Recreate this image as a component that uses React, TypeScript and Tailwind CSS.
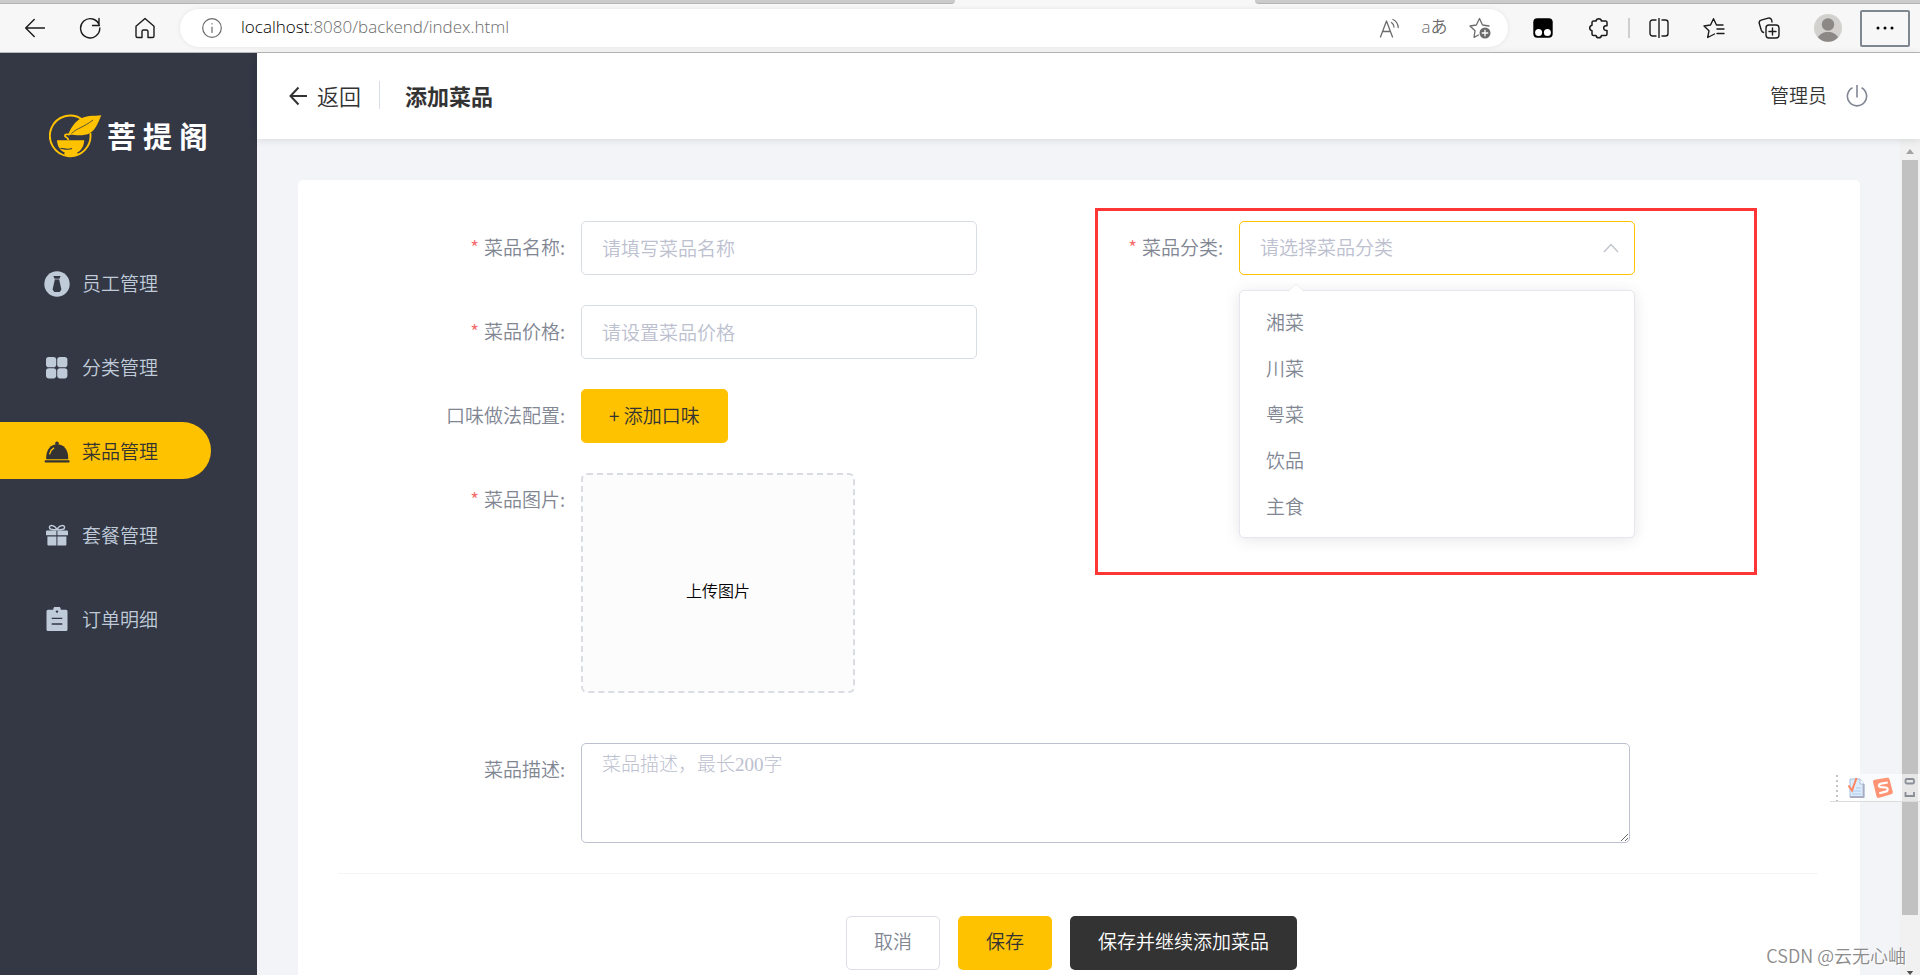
import { useState } from 'react'
import type { ReactNode } from 'react'
import clsx from 'clsx'

const menu = [
  { id: 'member', name: '员工管理', icon: <TieIcon /> },
  { id: 'category', name: '分类管理', icon: <GridIcon /> },
  { id: 'food', name: '菜品管理', icon: <DishIcon /> },
  { id: 'combo', name: '套餐管理', icon: <GiftIcon /> },
  { id: 'order', name: '订单明细', icon: <OrderIcon /> },
]

const categories = ['湘菜', '川菜', '粤菜', '饮品', '主食']

function TieIcon() {
  return (
    <svg viewBox="0 0 26 26" className="w-[26px] h-[26px]">
      <circle cx="13" cy="13" r="12.7" fill="currentColor" />
      <path d="M9.3 5h7.4l-1.6 3.2 2.3 10.2-1.7 2.6h-5.4l-1.7-2.6 2.3-10.2z" fill="#343744" />
      <path d="M10.6 8.1h4.8" stroke="currentColor" strokeWidth=".7" />
    </svg>
  )
}

function GridIcon() {
  return (
    <svg viewBox="0 0 26 26" className="w-[26px] h-[26px]" fill="currentColor">
      <rect x="2" y="2" width="10.200" height="10.200" rx="2.8" />
      <rect x="13.200" y="2" width="10.200" height="10.200" rx="2.8" />
      <rect x="2" y="13.200" width="10.200" height="10.200" rx="2.8" />
      <rect x="13.200" y="13.200" width="10.200" height="10.200" rx="2.8" />
    </svg>
  )
}

function DishIcon() {
  return (
    <svg viewBox="0 0 26 26" className="w-[26px] h-[26px]" fill="currentColor">
      <circle cx="13" cy="4.2" r="1.8" />
      <path d="M2.2 20.2v-1.6C2.2 10.500 6.800 5.200 13.200 5.200s11 5.300 11 13.400v1.600z" />
      <path d="M5.700 14.800c.6-2.600 1.900-4.500 4-5.700" stroke="#ffc200" strokeWidth="1.300" fill="none" strokeLinecap="round" />
      <rect x=".6" y="21.200" width="25" height="2.200" rx="1" />
    </svg>
  )
}

function GiftIcon() {
  return (
    <svg viewBox="0 0 26 26" className="w-[26px] h-[26px]" fill="currentColor">
      <path d="M13 6.600C11 2 5.200 1.200 5.400 4.600c.1 2.200 4 2.200 7.600 2zM13 6.600c2-4.600 7.800-5.400 7.600-2-.1 2.200-4 2.200-7.600 2z" fill="none" stroke="currentColor" strokeWidth="1.400" />
      <path d="M3 7.400h9.400v4.800H2V8.400a1 1 0 0 1 1-1zM13.400 7.400H23a1 1 0 0 1 1 1v3.800H13.400z" />
      <path d="M3.400 13.400h9v9.200h-8a1 1 0 0 1-1-1zM13.400 13.400h9v8.200a1 1 0 0 1-1 1h-8z" />
    </svg>
  )
}

function OrderIcon() {
  return (
    <svg viewBox="0 0 26 26" className="w-[26px] h-[26px]">
      <path d="M4 2.800h5.200a3.600 3.600 0 0 1 7.600 0H22a1.500 1.500 0 0 1 1.500 1.500v18.200A1.500 1.500 0 0 1 22 24H4a1.500 1.500 0 0 1-1.500-1.500V4.300A1.500 1.500 0 0 1 4 2.800z" fill="currentColor" />
      <circle cx="13" cy="4.600" r="1.200" fill="#343744" />
      <path d="M7.700 11.300h10.600M7.700 17h10.600" stroke="#343744" strokeWidth="1.300" />
    </svg>
  )
}

function Logo() {
  return (
    <div className="flex items-center text-white">
      <svg viewBox="0 0 53 44" className="w-[53px] h-[44px]">
        <path d="M33.500 5.700A20.300 20.300 0 1 0 41.300 19" fill="none" stroke="#ffc200" strokeWidth="1.900" />
        <path d="M19 21.500C21 15 25 9 30 5.500 36 1.500 45 2 52.300 1.300 49.500 8 47 15.500 41 19c-6 3.500-14 2-19.500 1.800z" fill="#ffc200" />
        <path d="M22.500 19.500c5.500-5.500 12-6 21.500-13.500" fill="none" stroke="#343744" strokeWidth=".8" />
        <path d="M20.500 20.600c-2.500-.8-5-.2-4.600 1.400.4 1.500 3.600 1 3.400 4.200" fill="none" stroke="#ffc200" strokeWidth="1.700" />
        <path d="M8 26.200h27.200c-.2 5.800-2.800 10.200-7.200 12.600v1.600H16v-1.600C11 36.400 8.200 32 8 26.200z" fill="#ffc200" />
        <path d="M11.500 34.300c4 .2 6 2.200 11.500.2" fill="none" stroke="#343744" strokeWidth="1.100" />
        <path d="M15 39h14l-1.500 2.800h-11z" fill="#ffc200" />
      </svg>
      <div className="ml-[5px] flex gap-[7px] pb-[3px] text-[29px] leading-[40px] font-bold">
        <span>菩</span>
        <span>提</span>
        <span>阁</span>
      </div>
    </div>
  )
}

function BarButton({ label, className, children }: { label: string; className: string; children: ReactNode }) {
  return (
    <button type="button" aria-label={label} className={clsx('flex h-[37px] shrink-0 items-center justify-center', className)}>
      {children}
    </button>
  )
}

const line = { fill: 'none', stroke: 'currentColor', strokeWidth: 1.4, strokeLinecap: 'round', strokeLinejoin: 'round' } as const

function BrowserBar() {
  return (
    <div className="shrink-0 border-b border-[#b9b9b9] bg-[#f7f7f7]">
      <div className="flex h-1 justify-between">
        <div className="w-[955px] rounded-br-lg border-b border-[#b4b4b4] bg-[#cbcbcb]" />
        <div className="w-[665px] rounded-bl-lg border-b border-[#b4b4b4] bg-[#cbcbcb]" />
      </div>
      <div className="flex h-12 items-center text-[#1b1b1b]">
        <div className="flex pl-[7px]">
          <BarButton label="后退" className="w-[55px]">
            <svg viewBox="0 0 20 20" className="size-5" {...line}><path d="M19.500 10H.7M9.200 1.500.7 10l8.500 8.500" /></svg>
          </BarButton>
          <BarButton label="刷新" className="w-[55px]">
            <svg viewBox="0 0 22 22" className="size-[22px]" {...line}><path d="M20.400 8.500A9.600 9.600 0 1 0 20.800 11M20 1.500v7h-6.500" /></svg>
          </BarButton>
          <BarButton label="主页" className="w-[55px]">
            <svg viewBox="0 0 22 22" className="size-[22px]" {...line}><path d="M2 9.200 11 1.500l9 7.700v9.800a1.500 1.500 0 0 1-1.500 1.500H14v-6a1.500 1.500 0 0 0-1.500-1.500h-3A1.500 1.500 0 0 0 8 14.500v6H3.500A1.500 1.500 0 0 1 2 19z" /></svg>
          </BarButton>
        </div>
        <div className="ml-2 flex h-[38px] flex-1 items-center rounded-full bg-white pr-[6px] pl-[22px] text-[#6b6b6b] shadow-[0_0_5px_rgba(0,0,0,0.08)]">
          <svg viewBox="0 0 20 20" className="size-5" {...line} strokeWidth={1.200}>
            <circle cx="10" cy="10" r="9.300" />
            <path d="M10 9v5.500M10 5.600v.3" />
          </svg>
          <div className="ml-[19px] flex-1 pb-0.5 font-['Open_Sans','Noto_Sans',sans-serif] text-[17px] leading-6">
            <span className="text-black">localhost</span>:8080/backend/index.html
          </div>
          <BarButton label="大声朗读" className="w-[45px]">
            <svg viewBox="0 0 22 20" className="h-5 w-[22px]" {...line} strokeWidth={1.300}>
              <path d="M1.500 19 7.500 3l6 16M3.500 13.500h8M12.500 4.500c1.500 1 2.300 2.500 2.500 4.500M14 1.500c3 1.500 5 4.500 5.200 8" />
            </svg>
          </BarButton>
          <BarButton label="翻译" className="w-[45px]">
            <span className="pb-0.5 font-['Open_Sans','Noto_Sans_CJK_JP',sans-serif] text-[17px] leading-5">aあ</span>
          </BarButton>
          <BarButton label="收藏此页" className="w-[45px]">
            <svg viewBox="0 0 22 22" className="size-[22px]" {...line} strokeWidth={1.300}>
              <path d="M9.500 18 5 20.300l1-6.500L1 9l6.300-1L10.500 1.500 13.500 8l6.500 1" />
              <circle cx="16" cy="16" r="5.500" fill="#6b6b6b" stroke="none" />
              <path d="M16 13.200v5.600M13.200 16h5.600" stroke="#fff" />
            </svg>
          </BarButton>
        </div>
        <div className="ml-[7px] mr-[10px] flex items-center">
          <BarButton label="篡改猴" className="w-14">
            <svg viewBox="0 0 20 20" className="size-5">
              <rect x=".3" y=".3" width="19.400" height="19.400" rx="4" fill="#000" />
              <circle cx="5.600" cy="14.500" r="3.500" fill="#fff" />
              <circle cx="14.400" cy="14.500" r="3.500" fill="#fff" />
            </svg>
          </BarButton>
          <BarButton label="扩展" className="w-14">
            <svg viewBox="0 0 22 22" className="size-[22px]" {...line} strokeWidth={1.500}>
              <path d="M8 4a2.800 2.800 0 0 1 5.500 0h4A1.500 1.500 0 0 1 19 5.500v3.300h-1a2.300 2.300 0 0 0 0 4.600h1v3.600a1.500 1.500 0 0 1-1.500 1.500h-4a2.800 2.800 0 0 1-5.500 0H5.500A1.500 1.500 0 0 1 4 17v-3.200a2.800 2.800 0 0 1 0-5.500V5.500A1.500 1.500 0 0 1 5.500 4z" />
            </svg>
          </BarButton>
          <div className="mx-px h-5 w-0.5 bg-[#cfcfcf]" />
          <BarButton label="分屏" className="w-[55px]">
            <svg viewBox="0 0 20 20" className="size-5" {...line}><path d="M7 2H3.500A2.500 2.500 0 0 0 1 4.500v11A2.500 2.500 0 0 0 3.500 18H7M13 2h3.500A2.500 2.500 0 0 1 19 4.500v11a2.500 2.500 0 0 1-2.500 2.500H13M10 .5v19" /></svg>
          </BarButton>
          <BarButton label="收藏夹" className="w-[55px]">
            <svg viewBox="0 0 22 22" className="size-[22px]" {...line}>
              <path d="m11.500 17-6.800 3.500 1.300-6.800L1 9l6.500-1 3-6.300L13.500 8H20M14 12h7M14 16.500h7" />
            </svg>
          </BarButton>
          <BarButton label="集锦" className="w-[55px]">
            <svg viewBox="0 0 22 22" className="size-[22px]" {...line}>
              <rect x="8" y="8" width="13" height="13" rx="3" />
              <path d="M14.500 11v7M11 14.500h7M5.500 15.500c-1.200-.4-1.800-1-2.200-2.200L1.300 6.500C.8 4.800 1.500 3.700 3.200 3.200l7-2c1.800-.5 3 .3 3.500 2L14 5" />
            </svg>
          </BarButton>
          <BarButton label="个人资料" className="ml-1 w-14">
            <svg viewBox="0 0 28 28" className="size-7">
              <circle cx="14" cy="14" r="14" fill="#d3d1ce" />
              <circle cx="14" cy="10.500" r="6.200" fill="#8b8885" />
              <path d="M4 23.500c1.500-3.500 5.500-5.500 10-5.500s8.500 2 10 5.500a14 14 0 0 1-20 0z" fill="#8b8885" />
            </svg>
          </BarButton>
          <BarButton label="设置及其他" className="ml-1 w-[50px] rounded-xs border-2 border-[#7f8791]">
            <svg viewBox="0 0 18 4" className="h-1 w-[18px]"><circle cx="2" cy="2" r="1.500" /><circle cx="9" cy="2" r="1.500" /><circle cx="16" cy="2" r="1.500" /></svg>
          </BarButton>
        </div>
      </div>
    </div>
  )
}

function Sidebar() {
  const [active, setActive] = useState('food')

  return (
    <aside className="w-[257px] shrink-0 bg-[#343744]">
      <div className="pt-[61px] pl-[49px]">
        <Logo />
      </div>
      <nav className="mt-[96px] flex flex-col gap-[27px]">
        {menu.map((item) => (
          <a
            key={item.id}
            href={`#${item.id}`}
            onClick={() => setActive(item.id)}
            className={clsx(
              'mr-[46px] flex h-[57px] items-center rounded-r-full pt-0.5 pl-11 text-[19px]',
              active === item.id ? 'bg-[#ffc200] text-[#333333]' : 'text-[#bfcbd9]',
            )}
          >
            {item.icon}
            <span className="ml-3">{item.name}</span>
          </a>
        ))}
      </nav>
    </aside>
  )
}

function Label({ htmlFor, required, children }: { htmlFor: string; required?: boolean; children: ReactNode }) {
  return (
    <label htmlFor={htmlFor} className="w-[243px] shrink-0 pr-4 text-right leading-[52px] text-[#818693]">
      {required && <span className="mr-[5px] text-[#f56c6c]">*</span>}
      {children}
    </label>
  )
}

function CategorySelect() {
  const [value, setValue] = useState('')

  return (
    <div className="relative flex">
      <Label htmlFor="category" required>菜品分类:</Label>
      <div className="relative w-[396px]">
        <select
          id="category"
          value={value}
          onChange={(e) => setValue(e.target.value)}
          className="h-[54px] w-full appearance-none rounded-[5px] border border-[#ffc200] bg-white px-5 pb-0.5 text-[#bcc0cf] outline-none"
        >
          <option value="">请选择菜品分类</option>
          {categories.map((c) => (
            <option key={c}>{c}</option>
          ))}
        </select>
        <svg viewBox="0 0 16 10" className="pointer-events-none absolute top-[22px] right-4 h-[10px] w-4" fill="none" stroke="#c0c4cc" strokeWidth="1.400">
          <path d="M1 9l7-7.500L15 9" />
        </svg>
        <div className="absolute top-[69px] left-0 w-full rounded-[5px] border border-[#e4e7ed] bg-white py-2 shadow-[0_2px_15px_rgba(0,0,0,0.1)]">
          <svg viewBox="0 0 16 8" className="absolute -top-[7px] left-[48px] h-2 w-4">
            <path d="M0 8l8-8 8 8z" fill="#fff" />
            <path d="M0 7.500l8-7.500 8 7.500" fill="none" stroke="#ebeef5" />
          </svg>
          <ul role="listbox" aria-label="菜品分类">
            {categories.map((c) => (
              <li
                key={c}
                role="option"
                aria-selected={value === c}
                onClick={() => setValue(c)}
                className="cursor-pointer px-[26px] leading-[46px] text-[#818693] hover:bg-[#f5f7fa]"
              >
                {c}
              </li>
            ))}
          </ul>
        </div>
      </div>
      <div className="pointer-events-none absolute -top-[13px] left-[99px] h-[367px] w-[662px] border-3 border-[#ff3636]" />
    </div>
  )
}

function FoodForm() {
  const field = 'h-[54px] w-[396px] rounded-[5px] border border-[#d8dde3] px-5 pb-0.5 placeholder:text-[#bcc0cf] outline-none'

  return (
    <form className="rounded-[5px] bg-white pr-[42px] pl-10 pt-[41px] pb-10 text-[19px]" onSubmit={(e) => e.preventDefault()}>
      <div className="flex flex-col gap-[30px]">
        <div className="flex gap-[19px]">
          <div className="flex">
            <Label htmlFor="name" required>菜品名称:</Label>
            <input id="name" type="text" placeholder="请填写菜品名称" className={field} />
          </div>
          <CategorySelect />
        </div>
        <div className="flex">
          <Label htmlFor="price" required>菜品价格:</Label>
          <input id="price" type="text" placeholder="请设置菜品价格" className={field} />
        </div>
        <div className="flex">
          <Label htmlFor="flavor">口味做法配置:</Label>
          <button id="flavor" type="button" className="h-[54px] rounded-[5px] bg-[#ffc200] px-7 pb-0.5 text-[#333333]">
            + 添加口味
          </button>
        </div>
        <div className="mb-5 flex">
          <Label htmlFor="image" required>菜品图片:</Label>
          <button
            id="image"
            type="button"
            className="flex h-[220px] w-[274px] items-center justify-center rounded-[6px] border-2 border-dashed border-[#d9dde2] bg-[#fcfcfc] pt-[14px] text-[16px] text-black"
          >
            上传图片
          </button>
        </div>
        <div className="flex">
          <Label htmlFor="desc">菜品描述:</Label>
          <textarea
            id="desc"
            placeholder="菜品描述，最长200字"
            className="h-[100px] w-[1049px] rounded-[5px] border border-[#bcc0cf] px-5 pt-[7px] font-['Liberation_Serif','Noto_Sans_CJK_SC',serif] leading-7 font-light placeholder:text-[#bcc0cf] outline-none"
          />
        </div>
      </div>
      <div className="mt-[30px] border-t border-[#f3f4f7]" />
      <div className="mt-[42px] flex justify-center gap-[18px] pr-[13px]">
        <button type="button" className="h-[54px] rounded-[5px] border border-[#dcdfe6] px-[27px] pb-1 text-[#818693]">取消</button>
        <button type="submit" className="h-[54px] rounded-[5px] bg-[#ffc200] px-7 pb-1 text-[#333333]">保存</button>
        <button type="button" className="h-[54px] rounded-[5px] bg-[#333333] px-7 pb-1 text-white">保存并继续添加菜品</button>
      </div>
    </form>
  )
}

function ScrollBar() {
  return (
    <div className="flex w-5 shrink-0 flex-col items-center bg-[#f1f1f1] pt-[10px]">
      <svg viewBox="0 0 8 5" className="h-[5px] w-2"><path d="M0 5l4-5 4 5z" fill="#a3a3a3" /></svg>
      <div className="mt-[6px] w-4 flex-1 bg-[#c1c1c1]" />
      <svg viewBox="0 0 8 5" className="mt-[56px] h-1 w-2"><path d="M0 0h8L4 5z" fill="#505050" /></svg>
    </div>
  )
}

function ImeBar() {
  return (
    <div className="absolute top-[774px] right-0 flex h-[28px] items-center border-b border-[#dcdcdc] bg-white/60 pr-[2px] pl-[6px]">
      <svg viewBox="0 0 4 28" className="h-7 w-1"><path d="M1 1v26" stroke="#c4c4c4" strokeWidth="2" strokeDasharray="2 3" /></svg>
      <svg viewBox="0 0 18 22" className="ml-[7px] h-[22px] w-[18px]">
        <path d="M3 2h10l4 5v13H3z" fill="#dcecfb" stroke="#a9bfdf" />
        <path d="M13 2v5h4" fill="#fff" stroke="#a9bfdf" />
        <path d="M16.500 7v13H3" fill="none" stroke="#a8adc4" strokeWidth="1.800" />
        <path d="M5 14h9M5 17h9M9 11h5" stroke="#a9cdf3" />
        <path d="M1.500 8.500 5 13.500 9.500 1" fill="none" stroke="#ff8563" strokeWidth="2" />
      </svg>
      <svg viewBox="0 0 22 22" className="ml-[7px] size-[22px]">
        <path d="M1 5c0-1.300.6-2 1.800-2.300L15 .8c1.400-.3 2.200.2 2.500 1.500l3.200 12.200c.3 1.500-.2 2.400-1.600 2.800L7.400 20.800c-1.500.4-2.500-.1-2.900-1.600z" fill="#ff9474" />
        <path d="M15.800 5.500 9 6.600c-2.600.5-2.800 3.200-.2 3.500l4.700.4c3 .3 2.800 3.400.1 4.100l-6.300 1.600" fill="none" stroke="#fff" strokeWidth="2.200" />
      </svg>
      <svg viewBox="0 0 16 22" className="ml-[8px] h-[22px] w-4" fill="none" stroke="#888d96" strokeWidth="1.800">
        <rect x="3.500" y="2" width="8.500" height="4.500" rx="1.500" />
        <path d="M3.500 15v4h8.500v-4" />
      </svg>
    </div>
  )
}

export default function App() {
  return (
    <div className="relative flex h-screen flex-col overflow-hidden bg-white font-['Noto_Sans_CJK_SC',sans-serif] font-[350]">
      <BrowserBar />
      <div className="flex min-h-0 flex-1">
        <Sidebar />
        <div className="flex min-w-0 flex-1 flex-col">
          <header className="relative flex h-[86px] shrink-0 items-center justify-between bg-white px-8 pb-0.5 text-[#333333] shadow-[0_1px_8px_rgba(0,21,41,0.12)]">
            <div className="flex items-center text-[22px]">
              <a href="#list" className="flex items-center">
                <svg viewBox="0 0 18 20" className="mt-0.5 h-5 w-[18px]" fill="none" stroke="#333" strokeWidth="2">
                  <path d="M18 10H1.500M9.500 1.500 1.500 10l8 8.500" />
                </svg>
                <span className="ml-[10px]">返回</span>
              </a>
              <div className="ml-[18px] h-7 w-px bg-[#d8dde6]" />
              <h1 className="ml-[25px] font-bold">添加菜品</h1>
            </div>
            <div className="flex items-center pr-5 text-[19px]">
              <span>管理员</span>
              <button type="button" aria-label="退出" className="ml-[19px] pt-0.5">
                <svg viewBox="0 0 22 22" className="size-[22px]" fill="none" stroke="#818693" strokeWidth="1.600">
                  <path d="M6.500 2.800a9.600 9.600 0 1 0 9 0M11 0v12.500" />
                </svg>
              </button>
            </div>
          </header>
          <div className="flex min-h-0 flex-1 bg-[#f3f4f7]">
            <main className="min-w-0 flex-1 overflow-hidden pr-10 pl-[41px] pt-[41px]">
              <FoodForm />
            </main>
            <ScrollBar />
          </div>
        </div>
      </div>
      <ImeBar />
      <div className="absolute right-[14px] bottom-1 text-[18px] leading-8 text-[#8c8c8c] [text-shadow:1px_1px_0_#fff]">CSDN @云无心岫</div>
    </div>
  )
}
